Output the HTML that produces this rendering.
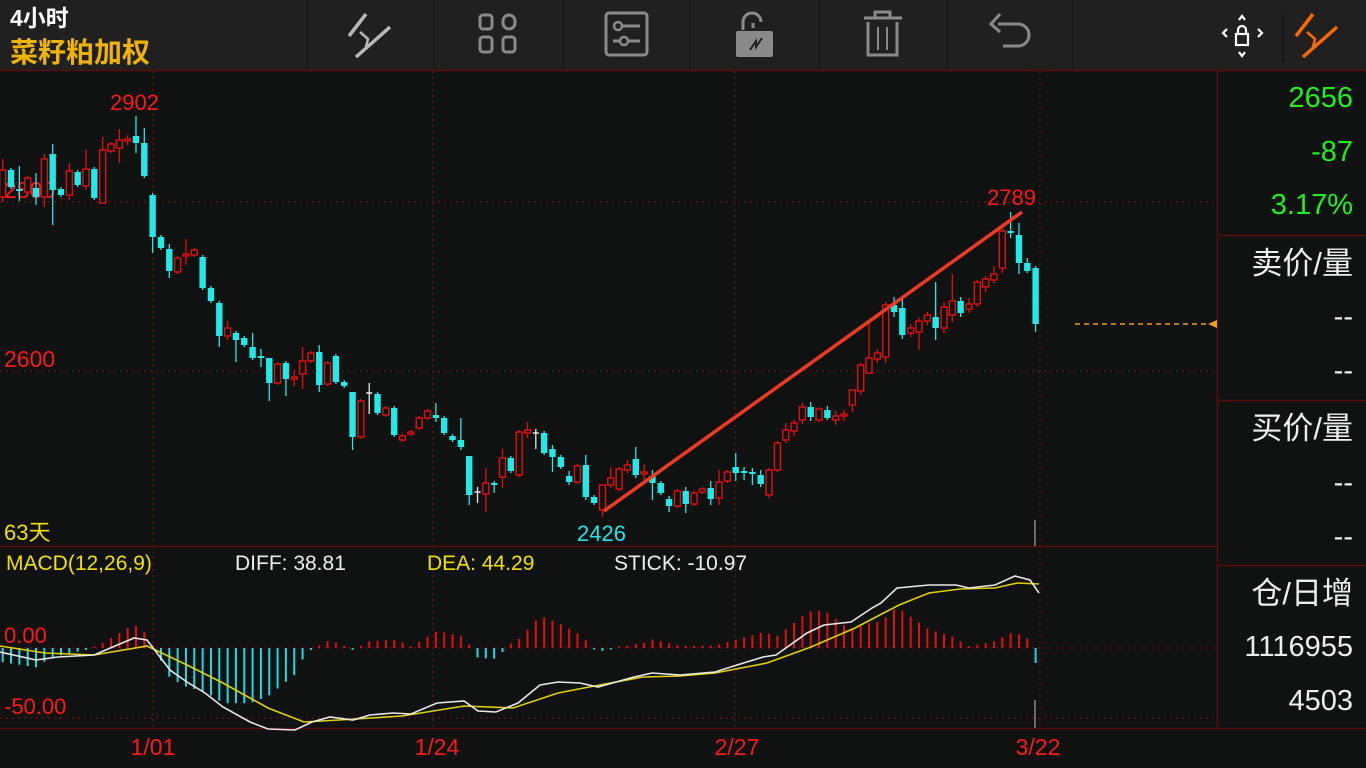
<!DOCTYPE html>
<html><head><meta charset="utf-8"><style>
html,body{margin:0;padding:0;background:#0f1210;width:1366px;height:768px;overflow:hidden;font-family:"Liberation Sans","Noto Sans CJK SC",sans-serif}
svg{position:absolute;left:0;top:0}
</style></head><body>
<svg id="s" width="1366" height="768" xmlns="http://www.w3.org/2000/svg" font-family="Liberation Sans, Noto Sans CJK SC, sans-serif">
<rect x="0" y="0" width="1366" height="70" fill="#202020"/>
<g stroke="#151515" stroke-width="1.5">
<line x1="307" y1="0" x2="307" y2="69"/><line x1="434" y1="0" x2="434" y2="69"/><line x1="563" y1="0" x2="563" y2="69"/><line x1="690" y1="0" x2="690" y2="69"/><line x1="819" y1="0" x2="819" y2="69"/><line x1="947" y1="0" x2="947" y2="69"/><line x1="1073" y1="0" x2="1073" y2="69"/>
</g>
<line x1="1283" y1="15" x2="1283" y2="62" stroke="#111" stroke-width="1.5"/>
<text x="10" y="26" fill="#fff" font-size="23" font-weight="bold">4小时</text>
<text x="10" y="62" fill="#f0b400" font-size="28" font-weight="bold">菜籽粕加权</text>
<!-- toolbar icons -->
<g stroke="#b8b8b8" stroke-width="3.5" fill="none" stroke-linecap="butt">
<line x1="349" y1="36" x2="366" y2="14"/><line x1="356" y1="57" x2="390" y2="27"/>
<polyline points="360,32 368,39 366,47 376,40" stroke-width="2.5"/>
</g>
<g stroke="#8a8a8a" stroke-width="3" fill="none">
<rect x="480" y="15" width="12" height="14" rx="3"/><rect x="503" y="15" width="12" height="14" rx="6"/>
<rect x="480" y="37" width="12" height="15" rx="3"/><rect x="503" y="37" width="12" height="15" rx="3"/>
<rect x="606" y="13" width="41" height="42" rx="3"/>
<line x1="613" y1="26" x2="640" y2="26"/><line x1="613" y1="41" x2="640" y2="41"/>
<line x1="753" y1="28" x2="753" y2="23"/><path d="M743 30 V22 a9 9 0 0 1 18 0"/>
<line x1="864" y1="18" x2="902" y2="18"/><rect x="875" y="12" width="15" height="6"/>
<path d="M868 22 V55 H897 V22"/><line x1="878" y1="27" x2="878" y2="50" stroke-width="2"/><line x1="887" y1="27" x2="887" y2="50" stroke-width="2"/>
<path d="M998 24 H1018 a11 11 0 0 1 0 22 H1003"/><path d="M1000 14 L991 24 L1000 32"/>
</g>
<circle cx="618" cy="26" r="4" fill="#202020" stroke="#8a8a8a" stroke-width="2.5"/>
<circle cx="624" cy="41" r="4" fill="#202020" stroke="#8a8a8a" stroke-width="2.5"/>
<rect x="736" y="31" width="37" height="26" rx="2" fill="#8a8a8a"/>
<polyline points="750,50 756,41 756,47 762,38" stroke="#202020" stroke-width="2" fill="none"/>
<g stroke="#fff" stroke-width="2.2" fill="none">
<rect x="1236" y="34" width="12" height="11"/><path d="M1238 34 v-4 a4 4 0 0 1 8 0 v4"/>
<polyline points="1239,20 1242,16 1245,20"/><polyline points="1239,52 1242,56 1245,52"/>
<polyline points="1227,29 1223,33 1227,37"/><polyline points="1258,29 1262,33 1258,37"/>
</g>
<g stroke="#ff6a00" stroke-width="3.5" fill="none">
<line x1="1296" y1="36" x2="1313" y2="14"/><line x1="1303" y1="57" x2="1337" y2="27"/>
<polyline points="1307,32 1315,39 1313,47 1323,40" stroke-width="2.5"/>
</g>
<!-- grid -->
<g stroke="#6a1414" stroke-width="1.2" stroke-dasharray="2,4">
<line x1="153" y1="71" x2="153" y2="728"/><line x1="433" y1="71" x2="433" y2="728"/><line x1="735" y1="71" x2="735" y2="728"/><line x1="1040" y1="71" x2="1040" y2="728"/>
<line x1="0" y1="202" x2="1217" y2="202"/><line x1="0" y1="371" x2="1217" y2="371"/>
<line x1="0" y1="648" x2="1217" y2="648"/><line x1="0" y1="718" x2="1217" y2="718"/>
</g>
<g stroke="#5c0b0b" stroke-width="1.5">
<line x1="0" y1="70.5" x2="1366" y2="70.5"/><line x1="0" y1="546.5" x2="1217" y2="546.5"/><line x1="0" y1="728.5" x2="1217" y2="728.5"/>
<line x1="1217.5" y1="71" x2="1217.5" y2="728"/>
<line x1="1217" y1="235.5" x2="1366" y2="235.5"/><line x1="1217" y1="400.5" x2="1366" y2="400.5"/><line x1="1217" y1="565.5" x2="1366" y2="565.5"/><line x1="1217" y1="728.5" x2="1366" y2="728.5"/>
</g>
<text x="4" y="198" fill="#ff1a1a" font-size="23">2800</text>
<text x="4" y="367" fill="#ff1a1a" font-size="23">2600</text>
<text x="110" y="110" fill="#ff1a1a" font-size="22">2902</text>
<text x="987" y="205" fill="#ff1a1a" font-size="22">2789</text>
<text x="577" y="541" fill="#22e5e5" font-size="22">2426</text>
<text x="4" y="540" fill="#f0e000" font-size="22">63天</text>
<line x1="1035" y1="520" x2="1035" y2="546" stroke="#888" stroke-width="1.5"/>
<line x1="1035" y1="700" x2="1035" y2="728" stroke="#888" stroke-width="1.5"/>
<g id="candles"></g>
<g id="macd"></g>
<line x1="604" y1="511" x2="1022" y2="212" stroke="#ee3a24" stroke-width="3.5"/>
<line x1="1075" y1="324" x2="1208" y2="324" stroke="#e8a020" stroke-width="1.5" stroke-dasharray="5,4"/>
<polygon points="1217,320 1217,328 1208,324" fill="#e8a020"/>
<text x="6" y="570" fill="#f0e000" font-size="21">MACD(12,26,9)</text>
<text x="235" y="570" fill="#eee" font-size="21">DIFF: 38.81</text>
<text x="427" y="570" fill="#f0e000" font-size="21">DEA: 44.29</text>
<text x="614" y="570" fill="#eee" font-size="21">STICK: -10.97</text>
<text x="4" y="643" fill="#ff1a1a" font-size="22">0.00</text>
<text x="4" y="714" fill="#ff1a1a" font-size="22">-50.00</text>
<g fill="#ff1a1a" font-size="23" text-anchor="middle">
<text x="153" y="755">1/01</text><text x="437" y="755">1/24</text><text x="737" y="755">2/27</text><text x="1038" y="755">3/22</text>
</g>
<g font-size="29" text-anchor="end">
<text x="1353" y="107" fill="#22ee22">2656</text>
<text x="1353" y="161" fill="#22ee22">-87</text>
<text x="1353" y="214" fill="#22ee22">3.17%</text>
<text x="1353" y="274" fill="#eee" font-size="31">卖价/量</text>
<text x="1353" y="326" fill="#eee">--</text>
<text x="1353" y="380" fill="#eee">--</text>
<text x="1353" y="439" fill="#eee" font-size="31">买价/量</text>
<text x="1353" y="492" fill="#eee">--</text>
<text x="1353" y="546" fill="#eee">--</text>
<text x="1353" y="604" fill="#eee" font-size="31">仓/日增</text>
<text x="1353" y="656" fill="#eee">1116955</text>
<text x="1353" y="710" fill="#eee">4503</text>
</g>
</svg>
<script>
var D=[
['r',170,197,159,202],['c',170,187],['c',189,191,166,201],['r',178,192],['c',188,197,173,205],['r',159,197,154,207],['c',154,190,144,225],['c',189,195],['r',171,195,163,200],['c',172,185],['r',169,186,150,190],['c',169,198],['r',150,203,137,203],['r',144,151],['r',140,148,129,163],['r',139,141,135,145],['c',136,143,116,153],['c',143,176,128,178],
['c',195,237,193,253],['c',237,248],['c',249,271,244,278],['r',258,272],['r',254,256,239,265],['r',250,255],['c',257,288],['c',288,301],['c',303,336,301,347],['r',328,336,321,340],['c',333,340,331,362],['c',338,345],['c',347,358,333,360],['c',356,358,349,367],['c',358,383,358,401],['r',364,383],['c',363,379,361,396],['r',377,379,370,386],['r',361,374,347,389],['r',353,361],['c',352,385,345,392],['r',363,384],['c',356,382],['c',382,386],
['c',392,437,392,450],['r',401,437],['w',393,395,383,414],['c',394,413],['r',408,415],['c',408,435],['r',436,440],['r',432,434],['r',418,428],['r',411,418],['c',415,418,403,422],['c',418,433],['c',436,440],
['c',440,447,418,450],['c',456,495,456,505],['w',492,494,487,503],['r',483,494,468,512],['c',483,485,481,493],['r',458,477,449,488],['c',458,471],['r',432,475],['r',430,433,422,438],['w',433,435,429,449],['c',433,453],['c',449,457,445,472],['c',457,467],['c',476,482,471,485],['r',466,482],['c',465,497,455,500],['c',497,503],['r',485,510,485,517],['r',478,485,467,488],['r',469,489],['r',465,470,460,473],['c',459,475,447,478],['r',472,474,464,480],['c',476,483,470,500],['c',483,493],['c',499,506,496,512],['r',491,506],['c',491,504,487,513],['r',493,504],['r',489,492],['c',488,499,481,505],['r',482,498,470,505],['r',472,481],['c',467,473,453,481],['c',471,473,467,480],['c',472,474,468,485],['c',475,484,470,487],['r',470,495,468,498],['r',443,470],['r',430,440,423,443],['r',423,431,420,436],['r',407,420,403,424],['c',407,417,402,421],['r',409,420],['c',410,418,406,420],['r',416,420,411,425],['r',414,416,410,421],['r',390,405,390,412],['r',365,391,363,395],['r',358,373,323,374],['r',353,359,349,363],['r',305,357,302,363],['c',305,312,297,317],['c',308,335,297,339],['r',328,333,324,337],['r',321,332,318,350],['r',315,321,312,325],['c',317,328,282,340],['r',307,328,302,333],['r',301,315,274,322],['c',301,313,297,317],['r',304,309,298,313],['r',282,304,280,307],['r',279,287,276,292],['r',274,280,266,283],['r',231,268,228,273],['c',231,233,212,238],['c',235,263,223,274],['c',263,271,258,273],['c',268,324,266,332]
];
var g=document.getElementById('candles'),h='';
D.forEach(function(d,i){var x=2.7+i*8.33,t=d[0],y1=d[1],y2=d[2],wh=d[3]!==undefined?d[3]:y1-2,wl=d[4]!==undefined?d[4]:y2+2;
var col=t=='r'?'#e01010':(t=='c'?'#22e8e8':'#e8e8e8');
h+='<line x1="'+x+'" y1="'+wh+'" x2="'+x+'" y2="'+wl+'" stroke="'+col+'" stroke-width="1.3"/>';
var bh=Math.max(y2-y1,1.5);
if(t=='r'){h+='<rect x="'+(x-3)+'" y="'+y1+'" width="6" height="'+bh+'" fill="#0f1210" stroke="'+col+'" stroke-width="1.4"/>';}
else if(t=='w'){h+='<line x1="'+(x-3)+'" y1="'+y1+'" x2="'+(x+3)+'" y2="'+y1+'" stroke="'+col+'" stroke-width="1.5"/>';}
else {h+='<rect x="'+(x-3.2)+'" y="'+y1+'" width="6.4" height="'+bh+'" fill="'+col+'"/>';}
});
g.innerHTML=h;
var W=[[0,652],[36,660],[58,657],[94,655],[134,638],[147,640],[170,670],[187,682],[205,693],[223,707],[250,722],[268,729],[295,730],[312,722],[330,717],[353,720],[370,715],[393,713],[411,714],[437,703],[464,701],[478,711],[496,712],[518,703],[540,685],[558,682],[580,683],[598,687],[634,677],[652,673],[680,675],[715,672],[737,665],[763,657],[776,655],[807,633],[824,625],[851,622],[872,608],[881,603],[897,588],[929,585],[956,585],[969,588],[995,585],[1015,576],[1030,580],[1039,593]];
var Y=[[0,646],[45,653],[94,655],[147,646],[187,665],[223,683],[268,708],[304,722],[339,720],[402,716],[464,706],[513,708],[558,693],[589,687],[643,677],[680,676],[715,673],[767,663],[811,647],[855,628],[899,605],[929,593],[960,589],[995,588],[1017,583],[1039,584]];
function it(a,x){for(var i=1;i<a.length;i++){if(x<=a[i][0]){var p=a[i-1],q=a[i];return p[1]+(q[1]-p[1])*(x-p[0])/(q[0]-p[0]);}}return a[a.length-1][1];}
var m='';
for(var i=0;i<=124;i++){var x=2.7+i*8.33;var v=(it(Y,x)-it(W,x))*2.3;if(i==124)v=-15;if(Math.abs(v)<1.5)v=v<0?-1.5:1.5;
m+='<line x1="'+x+'" y1="648" x2="'+x+'" y2="'+(648-v)+'" stroke="'+(v>0?'#e01010':'#22d8e0')+'" stroke-width="2"/>';}
function pl(a,c){return '<polyline points="'+a.map(function(p){return p.join(',')}).join(' ')+'" fill="none" stroke="'+c+'" stroke-width="1.6"/>';}
m+=pl(Y,'#e0d000')+pl(W,'#e8e8e8');
document.getElementById('macd').innerHTML=m;
</script>
</body></html>
